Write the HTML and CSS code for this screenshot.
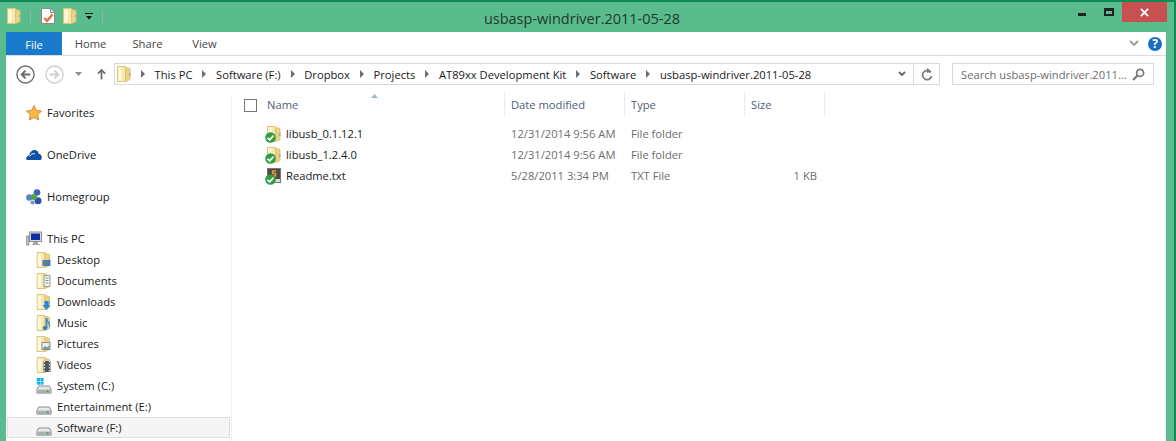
FILE: index.html
```html
<!DOCTYPE html>
<html lang="en">
<head>
    <meta charset="UTF-8">
    <title>usbasp-windriver.2011-05-28</title>
    <link rel="stylesheet" href="styles.css">
</head>
<body>
    <svg class="defs" width="0" height="0">
        <defs>
            <symbol id="folder" viewBox="0 0 14 16">
                <path d="M.5.5h8v15h-8z" fill="#f7e9ad" stroke="#dcc37e"/>
                <path d="M1.500 1.500h3v13h-3z" fill="#fdf8de"/>
                <path d="M8.500 1.500l4.500 1v11l-4.500 2z" fill="#eed27c" stroke="#dcc37e"/>
                <rect x="12" y="7" width="1.500" height="3" fill="#7db4e0"/>
            </symbol>
            <symbol id="drive" viewBox="0 0 18 10">
                <path d="M3 1h12l2 4v4H1V5z" fill="#e6e9e9" stroke="#7e8484"/>
                <rect x="1.500" y="5" width="15" height="4" fill="#a9b0b0"/>
                <rect x="12" y="6" width="2" height="2" fill="#4aa52e"/>
            </symbol>
            <symbol id="check" viewBox="0 0 9 9">
                <circle cx="4.500" cy="4.500" r="4.300" fill="#2f9e3f"/>
                <path d="M2 4.700l1.800 1.800L7 3" fill="none" stroke="#fff" stroke-width="1.400"/>
            </symbol>
        </defs>
    </svg>

    <div class="window">
        <div class="titlebar">
            <div class="quick">
                <svg class="qico" viewBox="0 0 14 16"><use href="#folder"/></svg>
                <span class="qsep"></span>
                <svg class="qico" viewBox="0 0 14 16">
                    <path d="M.5.5h9l4 4v11H.5z" fill="#fafafa" stroke="#8a8a8a"/>
                    <path d="M9.500.5v4h4" fill="#e4e4e4" stroke="#8a8a8a"/>
                    <path d="M3.500 10l2.500 3 5.500-6.500" fill="none" stroke="#e2704a" stroke-width="2.400"/>
                </svg>
                <svg class="qico second" viewBox="0 0 14 16"><use href="#folder"/></svg>
                <svg class="qdrop" viewBox="0 0 8 7">
                    <path d="M0 0h8v1H0z" fill="#111"/>
                    <path d="M1 3h6L4 6.500z" fill="#111"/>
                </svg>
                <span class="qsep last"></span>
            </div>
            <div class="title">usbasp-windriver.2011-05-28</div>
            <div class="winbtns">
                <span class="minbtn"></span>
                <span class="maxbtn"></span>
                <div class="closebtn">
                    <svg viewBox="0 0 10 10" width="9" height="9"><path d="M1 1l8 8M9 1l-8 8" stroke="#fff" stroke-width="2"/></svg>
                </div>
            </div>
        </div>

        <div class="content">
            <div class="tabs">
                <div class="tab file">File</div>
                <div class="tab">Home</div>
                <div class="tab">Share</div>
                <div class="tab">View</div>
                <div class="tabs-right">
                    <svg width="10" height="7" viewBox="0 0 10 7"><path d="M1 1l4 4 4-4" fill="none" stroke="#9a9a9a" stroke-width="1.800"/></svg>
                    <div class="help">?</div>
                </div>
            </div>

            <div class="navbar">
                <div class="navbtns">
                    <svg width="19" height="19" viewBox="0 0 20 20"><circle cx="10" cy="10" r="9" fill="#fff" stroke="#6d6d6d" stroke-width="1.500"/><path d="M15 10H6M10 6l-4 4 4 4" fill="none" stroke="#6d6d6d" stroke-width="2"/></svg>
                    <svg class="fwd" width="19" height="19" viewBox="0 0 20 20"><circle cx="10" cy="10" r="9" fill="#fff" stroke="#cfcfcf" stroke-width="1.500"/><path d="M5 10h9M10 6l4 4-4 4" fill="none" stroke="#cfcfcf" stroke-width="2"/></svg>
                    <svg class="recent" width="7" height="4" viewBox="0 0 7 4"><path d="M0 0h7L3.500 4z" fill="#8f8f8f"/></svg>
                    <svg class="up" width="9" height="12" viewBox="0 0 10 12"><path d="M5 12V2M1 5.500l4-4 4 4" fill="none" stroke="#6d6d6d" stroke-width="2"/></svg>
                </div>
                <div class="address">
                    <svg class="qico addr-ico" viewBox="0 0 14 16"><use href="#folder"/></svg>
                    <div class="crumbs">
                        <span class="arrow"></span><span>This PC</span>
                        <span class="arrow"></span><span>Software (F:)</span>
                        <span class="arrow"></span><span>Dropbox</span>
                        <span class="arrow"></span><span>Projects</span>
                        <span class="arrow"></span><span>AT89xx Development Kit</span>
                        <span class="arrow"></span><span>Software</span>
                        <span class="arrow"></span><span>usbasp-windriver.2011-05-28</span>
                    </div>
                    <div class="addr-drop">
                        <svg width="8" height="6" viewBox="0 0 8 6"><path d="M1 1l3 3 3-3" fill="none" stroke="#666" stroke-width="1.800"/></svg>
                    </div>
                    <div class="addr-refresh">
                        <svg width="12" height="13" viewBox="0 0 12 13"><path d="M9.700 4.500A4.500 4.500 0 1 0 10.500 8" fill="none" stroke="#777" stroke-width="1.700"/><path d="M6 0l4.500 3.500L6 5z" fill="#777"/></svg>
                    </div>
                </div>
                <div class="search">
                    <span>Search usbasp-windriver.2011...</span>
                    <svg width="13" height="13" viewBox="0 0 12 12"><circle cx="7.500" cy="4.500" r="3.200" fill="none" stroke="#777" stroke-width="1.600"/><path d="M5 7l-4 4" stroke="#777" stroke-width="2"/></svg>
                </div>
            </div>

            <div class="panes">
                <div class="sidebar">
                    <div class="nav-item top">
                        <svg class="ico16" viewBox="0 0 16 16"><path d="M8 .5l2.300 4.900 5.200.7-3.800 3.600 1 5.300L8 12.400l-4.700 2.600 1-5.300L.5 6.100l5.200-.7z" fill="#f8b93c" stroke="#e0863a"/></svg>
                        <span>Favorites</span>
                    </div>
                    <div class="nav-item top group">
                        <svg class="ico16" viewBox="0 0 16 16"><path d="M.7 13c-1.200-2.200.2-4.500 2.300-4.600C4 5 6 3 8.500 3c2.300 0 3.800 1.500 4.300 3.700 2 .2 3.300 2.300 2.900 4.300-.2.900-.5 1.600-1 2z" fill="#0f4fa8"/><path d="M3.500 9.500c1.200-2.300 3.300-3.300 5.500-2.700" fill="none" stroke="#fff"/></svg>
                        <span>OneDrive</span>
                    </div>
                    <div class="nav-item top group">
                        <svg class="ico16" viewBox="0 0 16 16"><circle cx="11" cy="3.500" r="3.300" fill="#3d64b8"/><circle cx="3.300" cy="8.500" r="3.200" fill="#5a7fcc"/><circle cx="12" cy="11.800" r="3.500" fill="#2f52a8"/><circle cx="6.500" cy="13.500" r="2" fill="#6f8fd4"/><circle cx="8" cy="8" r="3" fill="#4fa83a"/></svg>
                        <span>Homegroup</span>
                    </div>
                    <div class="nav-item top group">
                        <svg class="ico16" viewBox="0 0 16 16"><rect x="3.500" y="1" width="12" height="9.500" fill="#d8dcdc" stroke="#8c9090"/><rect x="5" y="2.500" width="9" height="6.500" fill="#0d2fa0"/><rect x=".5" y="5" width="2.500" height="9" fill="#b8bcbc" stroke="#808080" stroke-width=".6"/><path d="M7 11h5v2h2v1H6v-1h1z" fill="#a6aaaa"/></svg>
                        <span>This PC</span>
                    </div>
                    <div class="nav-item sub">
                        <svg class="ico15" viewBox="0 0 14 16"><use href="#folder"/><rect x="6" y="8" width="8" height="6" fill="#4f7fa8"/></svg>
                        <span>Desktop</span>
                    </div>
                    <div class="nav-item sub">
                        <svg class="ico15" viewBox="0 0 14 16"><use href="#folder"/><rect x="7.500" y="2.500" width="6" height="11" fill="#f4f4f4" stroke="#9a9a9a"/><path d="M9 5h3M9 7.500h3M9 10h3" stroke="#7d93b0"/></svg>
                        <span>Documents</span>
                    </div>
                    <div class="nav-item sub">
                        <svg class="ico15" viewBox="0 0 14 16"><use href="#folder"/><path d="M8 7h4v4h2l-4 5-4-5h2z" fill="#2e86d8"/></svg>
                        <span>Downloads</span>
                    </div>
                    <div class="nav-item sub">
                        <svg class="ico15" viewBox="0 0 14 16"><use href="#folder"/><path d="M10 3c0 4 4 4 3 9" fill="none" stroke="#3a9ad8" stroke-width="1.300"/><path d="M10 3v10" stroke="#2f86c8" stroke-width="1.600"/><ellipse cx="8.500" cy="13" rx="2.400" ry="2" fill="#2f86c8"/></svg>
                        <span>Music</span>
                    </div>
                    <div class="nav-item sub">
                        <svg class="ico15" viewBox="0 0 14 16"><use href="#folder"/><rect x="5.500" y="6.500" width="8" height="7" fill="#e8eef0" stroke="#8a9090"/><path d="M6 13l2.500-3 2 1.500 2.500-2.500v4z" fill="#6f9f9a"/></svg>
                        <span>Pictures</span>
                    </div>
                    <div class="nav-item sub">
                        <svg class="ico15" viewBox="0 0 14 16"><use href="#folder"/><rect x="7" y="4" width="7" height="11" fill="#4a5560"/><path d="M8 4v11M13 4v11" stroke="#d8e0e0" stroke-dasharray="1.500 1.500" stroke-width="1.300"/></svg>
                        <span>Videos</span>
                    </div>
                    <div class="nav-item sub">
                        <svg class="ico16" viewBox="0 0 18 18"><rect x="1" y="0" width="3.500" height="3.500" fill="#12b4f0"/><rect x="5" y="0" width="3.500" height="3.500" fill="#12b4f0"/><rect x="1" y="4" width="3.500" height="3.500" fill="#12b4f0"/><rect x="5" y="4" width="3.500" height="3.500" fill="#12b4f0"/><svg x="0" y="8" width="18" height="10" viewBox="0 0 18 10"><use href="#drive"/></svg></svg>
                        <span>System (C:)</span>
                    </div>
                    <div class="nav-item sub">
                        <svg class="ico16" viewBox="0 0 18 18"><svg x="0" y="8" width="18" height="10" viewBox="0 0 18 10"><use href="#drive"/></svg></svg>
                        <span>Entertainment (E:)</span>
                    </div>
                    <div class="nav-item sub selected">
                        <svg class="ico16" viewBox="0 0 18 18"><svg x="0" y="8" width="18" height="10" viewBox="0 0 18 10"><use href="#drive"/></svg></svg>
                        <span>Software (F:)</span>
                    </div>
                </div>

                <div class="files">
                    <div class="file-head">
                        <span class="checkbox"></span>
                        <div class="col col-name">Name<svg class="sort" width="7" height="4" viewBox="0 0 7 4"><path d="M3.500 0L7 4H0z" fill="#9fb6cc"/></svg></div>
                        <div class="col col-date">Date modified</div>
                        <div class="col col-type">Type</div>
                        <div class="col col-size">Size</div>
                    </div>
                    <div class="file-row">
                        <div class="cell-name">
                            <span class="file-ico"><svg class="row-ico" viewBox="0 0 14 16"><use href="#folder"/></svg><svg class="badge" viewBox="0 0 9 9"><use href="#check"/></svg></span>
                            libusb_0.1.12.1
                        </div>
                        <div class="cell-date">12/31/2014 9:56 AM</div>
                        <div class="cell-type">File folder</div>
                        <div class="cell-size"></div>
                    </div>
                    <div class="file-row">
                        <div class="cell-name">
                            <span class="file-ico"><svg class="row-ico" viewBox="0 0 14 16"><use href="#folder"/></svg><svg class="badge" viewBox="0 0 9 9"><use href="#check"/></svg></span>
                            libusb_1.2.4.0
                        </div>
                        <div class="cell-date">12/31/2014 9:56 AM</div>
                        <div class="cell-type">File folder</div>
                        <div class="cell-size"></div>
                    </div>
                    <div class="file-row">
                        <div class="cell-name">
                            <span class="file-ico"><svg class="row-ico" viewBox="0 0 14 16"><rect x=".5" y=".5" width="13" height="14" fill="#4a4a48" stroke="#777"/><path d="M1 11h12v3H1z" fill="#d8d8d8"/><path d="M9 3H5.500v2.500H8.500V8H5" fill="none" stroke="#f09a2a" stroke-width="1.400"/></svg><svg class="badge" viewBox="0 0 9 9"><use href="#check"/></svg></span>
                            Readme.txt
                        </div>
                        <div class="cell-date">5/28/2011 3:34 PM</div>
                        <div class="cell-type">TXT File</div>
                        <div class="cell-size">1 KB</div>
                    </div>
                </div>
            </div>
        </div>
    </div>
</body>
</html>
```
FILE: styles.css
```css
html, body {
    margin: 0;
    height: 100%;
    overflow: hidden;
}
body {
    font-family: "Open Sans", "Noto Sans", Arial, sans-serif;
    font-size: 11.2px;
    color: #1a1a1a;
}
.defs {
    position: absolute;
}
.window {
    height: 100%;
    box-sizing: border-box;
    background: #5abc8c;
    border-top: 2px solid #0f8a55;
    border-right: 2px solid #0f8a55;
    padding-left: 6px;
    padding-right: 8px;
    display: flex;
    flex-direction: column;
}
.titlebar {
    height: 30px;
    display: flex;
    align-items: flex-start;
}
.quick {
    display: flex;
    align-items: center;
    height: 28px;
    margin-left: 1px;
}
.qico {
    width: 14px;
    height: 16px;
    flex: none;
}
.qsep {
    width: 1px;
    height: 13px;
    background: #8fb8a0;
    margin: 0 10px 0 9px;
}
.qsep.last {
    margin-left: 9px;
}
.second {
    margin-left: 8px;
}
.qdrop {
    width: 8px;
    height: 7px;
    margin-left: 8px;
}
.title {
    flex: 1;
    text-align: center;
    font-size: 14.5px;
    line-height: 34px;
    color: #1c3a2a;
    padding-right: 27px;
}
.winbtns {
    display: flex;
    align-items: flex-start;
    margin-right: -1px;
}
.minbtn {
    width: 8px;
    height: 3px;
    background: #222;
    margin-top: 11px;
}
.maxbtn {
    width: 6px;
    height: 3px;
    border: 2px solid #222;
    border-top-width: 3px;
    margin: 6px 0 0 18px;
}
.closebtn {
    width: 45px;
    height: 20px;
    background: #c75050;
    margin-left: 8px;
    display: flex;
    align-items: center;
    justify-content: center;
}
.content {
    flex: 1;
    background: #fff;
    min-height: 0;
    display: flex;
    flex-direction: column;
}
.tabs {
    height: 23px;
    display: flex;
    border-bottom: 1px solid #dadbdc;
    color: #444;
    align-items: center;
    line-height: 25px;
}
.tab {
    width: 57px;
    text-align: center;
}
.tab.file {
    width: 56px;
    height: 100%;
    background: #1979ca;
    color: #fff;
}
.tabs-right {
    margin-left: auto;
    display: flex;
    align-items: center;
    gap: 9px;
    padding-right: 4px;
}
.help {
    width: 14px;
    height: 14px;
    line-height: 14px;
    border-radius: 50%;
    background: #1a6fc4;
    color: #fff;
    font-weight: bold;
    font-size: 12px;
    text-align: center;
}
.navbar {
    height: 40px;
    display: flex;
    align-items: center;
    padding-left: 10px;
    padding-bottom: 4px;
    box-sizing: border-box;
}
.navbtns {
    display: flex;
    align-items: center;
    width: 98px;
    flex: none;
}
.fwd {
    margin-left: 10px;
}
.recent {
    margin-left: 11px;
}
.up {
    margin-left: 15px;
}
.address {
    width: 826px;
    flex: none;
    height: 22px;
    box-sizing: border-box;
    border: 1px solid #d9d9d9;
    display: flex;
    align-items: center;
}
.addr-ico {
    margin-left: 2px;
}
.crumbs {
    flex: 1;
    display: flex;
    align-items: center;
    white-space: nowrap;
}
.crumbs .arrow {
    width: 0;
    height: 0;
    border-left: 4px solid #6d6d6d;
    border-top: 4px solid transparent;
    border-bottom: 4px solid transparent;
    margin: 0 9.6px 0 10px;
}
.addr-drop {
    width: 22px;
    text-align: center;
    height: 100%;
    display: flex;
    align-items: center;
    justify-content: center;
    border-right: 1px solid #d9d9d9;
}
.addr-refresh {
    width: 25px;
    display: flex;
    align-items: center;
    justify-content: center;
}
.search {
    width: 202px;
    flex: none;
    height: 22px;
    box-sizing: border-box;
    border: 1px solid #d9d9d9;
    margin-left: 12px;
    display: flex;
    align-items: center;
    justify-content: space-between;
    padding: 0 8px;
    color: #6d6d6d;
    white-space: nowrap;
}
.panes {
    flex: 1;
    display: flex;
    min-height: 0;
}
.sidebar {
    width: 225px;
    flex: none;
    border-right: 1px solid #f0f0f0;
    padding-top: 6px;
}
.nav-item {
    height: 21px;
    display: flex;
    align-items: center;
    box-sizing: border-box;
    gap: 5px;
}
.nav-item.top {
    padding-left: 20px;
}
.nav-item.group {
    margin-top: 21px;
}
.nav-item.sub {
    padding-left: 30px;
}
.ico16 {
    width: 16px;
    height: 16px;
    flex: none;
}
.ico15 {
    width: 15px;
    height: 16px;
    margin-right: 1px;
    flex: none;
}
.nav-item.selected {
    background: #f5f5f5;
    border: 1px solid #dedede;
    margin: 0 1px;
    padding-left: 28px;
}
.files {
    flex: 1;
    padding-left: 12px;
    color: #6d6d6d;
}
.file-head {
    display: flex;
    align-items: center;
    height: 22px;
    margin-top: -3px;
}
.checkbox {
    width: 11px;
    height: 11px;
    border: 1px solid #777;
    margin-top: 2px;
    flex: none;
}
.col {
    height: 100%;
    line-height: 24px;
    box-sizing: border-box;
    border-right: 1px solid #e3eaf2;
    color: #4c607a;
    position: relative;
}
.col-name {
    width: 248px;
    padding-left: 10px;
}
.sort {
    position: absolute;
    left: 114px;
    top: 1px;
}
.col-date,
.col-type {
    width: 120px;
    padding-left: 6px;
}
.col-size {
    width: 80px;
    padding-left: 6px;
}
.file-row {
    display: flex;
    height: 21px;
    line-height: 21px;
    align-items: center;
}
.file-head + .file-row {
    margin-top: 8px;
}
.cell-name {
    width: 267px;
    padding-left: 23px;
    box-sizing: border-box;
    display: flex;
    align-items: center;
    color: #1a1a1a;
}
.file-ico {
    position: relative;
    width: 14px;
    height: 16px;
    margin-right: 5px;
    flex: none;
}
.row-ico {
    display: block;
    width: 14px;
    height: 16px;
}
.badge {
    position: absolute;
    left: -2px;
    bottom: -1px;
    width: 11px;
    height: 11px;
}
.cell-date,
.cell-type {
    width: 120px;
}
.cell-size {
    width: 66px;
    text-align: right;
}
```
